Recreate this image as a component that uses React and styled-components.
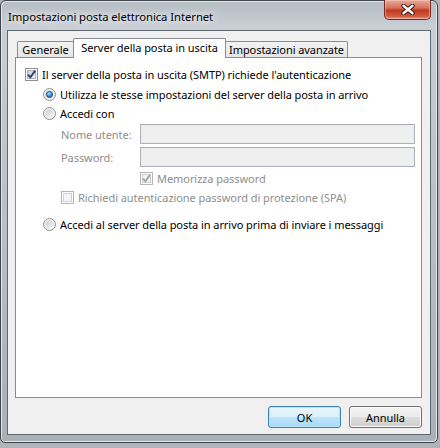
import React, { useId } from "react";
import styled, { createGlobalStyle } from "styled-components";

const GlobalStyle = createGlobalStyle`
  body {
    margin: 0;
    background: #aeb4b9;
    font-family: "Segoe UI", "Noto Sans", sans-serif;
    font-size: 11px;
    letter-spacing: -0.06px;
  }
`;

const Desktop = styled.div`
  width: 440px;
  height: 448px;
  overflow: hidden;
`;

const Window = styled.div`
  box-sizing: border-box;
  width: 438px;
  height: 443px;
  border: 1px solid #3e454d;
  border-radius: 6px 6px 5px 5px;
  background: linear-gradient(to bottom, #b4bcc4 0, #c9cfd5 26px, #c0c6cc 120px, #a9b0b7 100%);
  box-shadow: inset 1px 1px 0 #e3e7eb, inset -1px -1px 0 #e3e7eb;
  padding: 0 6px 7px;
  display: flex;
  flex-direction: column;
`;

const TitleBar = styled.div`
  height: 29px;
  display: flex;
  align-items: flex-start;
  justify-content: space-between;
`;

const Title = styled.div`
  margin: 8px 0 0 1px;
  color: #000;
  font-size: 11.3px;
  text-shadow: 0 0 6px #fff, 0 0 10px #fff;
`;

const CloseButton = styled.div`
  width: 47px;
  height: 20px;
  margin-top: -1px;
  box-sizing: border-box;
  border: 1px solid #6b2a20;
  border-top: none;
  border-radius: 0 0 5px 5px;
  background: linear-gradient(to bottom, #e9a99b 0, #d6735f 40%, #c2391f 55%, #cf5a3f 85%, #e39a7d 100%);
  box-shadow: inset 0 0 0 1px rgba(255, 210, 200, 0.5);
  display: flex;
  align-items: center;
  justify-content: center;
`;

const Client = styled.div`
  flex: 1;
  border: 1px solid #5f676f;
  background: #f0f0f0;
  padding: 7px 8px 0 7px;
  display: flex;
  flex-direction: column;
`;

const TabStrip = styled.div`
  height: 19px;
  display: flex;
  align-items: flex-end;
  padding-left: 2px;
  position: relative;
  z-index: 1;
`;

const Tab = styled.div`
  box-sizing: border-box;
  width: ${(p) => p.$w}px;
  height: ${(p) => (p.$active ? 20 : 16)}px;
  margin-left: ${(p) => (p.$first ? 0 : -1)}px;
  margin-bottom: ${(p) => (p.$active ? -1 : 0)}px;
  border: 1px solid #898c95;
  border-bottom: none;
  border-radius: 2px 2px 0 0;
  background: ${(p) => (p.$active ? "#fff" : "linear-gradient(to bottom, #f3f3f3, #e5e5e5)")};
  color: #000;
  text-align: center;
  line-height: ${(p) => (p.$active ? 17 : 15)}px;
  white-space: nowrap;
  position: relative;
  z-index: ${(p) => (p.$active ? 2 : 1)};
`;

const Panel = styled.div`
  box-sizing: border-box;
  width: 407px;
  height: 341px;
  border: 1px solid #898c95;
  background: #fff;
  padding: 8px 6px 0 9px;
  display: flex;
  flex-direction: column;
`;

const Row = styled.div`
  display: flex;
  align-items: center;
  height: ${(p) => p.$h || 16}px;
  margin-top: ${(p) => p.$mt || 0}px;
  padding-left: ${(p) => p.$indent || 0}px;
  white-space: nowrap;
`;

const Label = styled.span`
  margin-left: 4px;
  color: ${(p) => (p.$disabled ? "#8e8e8e" : "#000")};
`;

const FieldLabel = styled.span`
  width: 79px;
  color: #8e8e8e;
`;

const TextBox = styled.div`
  flex: 1;
  box-sizing: border-box;
  height: 20px;
  border: 1px solid #adb2bb;
  border-top-color: #abadb3;
  background: #efefef;
  box-shadow: inset 0 0 0 1px #e8ebf0;
`;

const ButtonRow = styled.div`
  width: 407px;
  margin-top: 8px;
  display: flex;
  justify-content: flex-end;
  gap: 8px;
`;

const Button = styled.div`
  box-sizing: border-box;
  width: 73px;
  height: 22px;
  border: 1px solid ${(p) => (p.$default ? "#3c7fb1" : "#707070")};
  border-radius: 3px;
  background: ${(p) =>
    p.$default
      ? "linear-gradient(to bottom, #eaf6fd 0, #d9f0fc 50%, #bee6fd 51%, #a7d9f5 100%)"
      : "linear-gradient(to bottom, #f2f2f2 0, #ebebeb 50%, #dddddd 51%, #cfcfcf 100%)"};
  box-shadow: inset 0 0 0 1px ${(p) => (p.$default ? "#b9e3f8" : "#fcfcfc")};
  color: #000;
  display: flex;
  align-items: center;
  justify-content: center;
`;

const CloseGlyph = () => (
  <svg width="14" height="11" viewBox="0 0 14 11">
    <path d="M2.5 1.8 L11.5 9.2 M11.5 1.8 L2.5 9.2" stroke="#3b1912" strokeWidth="4.4" strokeLinecap="round" fill="none" />
    <path d="M2.5 1.8 L11.5 9.2 M11.5 1.8 L2.5 9.2" stroke="#fff" strokeWidth="2.4" strokeLinecap="round" fill="none" />
  </svg>
);

const CheckBox = ({ checked, disabled }) => {
  const id = useId();
  const edge = disabled ? "#b5b5b5" : "#8e8f8f";
  const mark = disabled ? "#a5a5a5" : "#2a427a";
  return (
    <svg width="13" height="13" viewBox="0 0 13 13">
      <defs>
        <linearGradient id={id} x1="0" y1="0" x2="1" y2="1">
          <stop offset="0" stopColor={disabled ? "#f4f4f4" : "#cbcfd5"} />
          <stop offset="1" stopColor={disabled ? "#f4f4f4" : "#f7f7f7"} />
        </linearGradient>
      </defs>
      <rect x="0.5" y="0.5" width="12" height="12" fill="#fff" stroke={edge} />
      <rect x="2.5" y="2.5" width="8" height="8" fill={`url(#${id})`} stroke={disabled ? "#d0d0d0" : "#aeb3b9"} />
      {checked && (
        <path d="M3 6.6 L5.4 9.2 L10.2 2.6" stroke={mark} strokeWidth="1.9" fill="none" />
      )}
    </svg>
  );
};

const Radio = ({ checked }) => {
  const id = useId();
  return (
    <svg width="13" height="13" viewBox="0 0 13 13">
      <defs>
        <linearGradient id={`${id}a`} x1="0" y1="0" x2="1" y2="1">
          <stop offset="0" stopColor="#c9ccd1" />
          <stop offset="1" stopColor="#f8f8f8" />
        </linearGradient>
        <radialGradient id={`${id}b`} cx="0.4" cy="0.35" r="0.7">
          <stop offset="0" stopColor="#a6e7ff" />
          <stop offset="0.5" stopColor="#3b9be0" />
          <stop offset="1" stopColor="#1a4f91" />
        </radialGradient>
      </defs>
      <circle cx="6.5" cy="6.5" r="6" fill="#f4f4f4" stroke="#8e8f8f" />
      <circle cx="6.5" cy="6.5" r="4.2" fill={`url(#${id}a)`} />
      {checked && <circle cx="6.5" cy="6.5" r="3.1" fill={`url(#${id}b)`} stroke="#2b4d80" strokeWidth="0.8" />}
    </svg>
  );
};

export default function App() {
  return (
    <Desktop>
      <GlobalStyle />
      <Window>
        <TitleBar>
          <Title>Impostazioni posta elettronica Internet</Title>
          <CloseButton>
            <CloseGlyph />
          </CloseButton>
        </TitleBar>
        <Client>
          <TabStrip>
            <Tab $first $w={57}>Generale</Tab>
            <Tab $active $w={153}>Server della posta in uscita</Tab>
            <Tab $w={123}>Impostazioni avanzate</Tab>
          </TabStrip>
          <Panel>
            <Row>
              <CheckBox checked />
              <Label>Il server della posta in uscita (SMTP) richiede l'autenticazione</Label>
            </Row>
            <Row $indent={18} $mt={4}>
              <Radio checked />
              <Label>Utilizza le stesse impostazioni del server della posta in arrivo</Label>
            </Row>
            <Row $indent={18} $mt={3}>
              <Radio />
              <Label>Accedi con</Label>
            </Row>
            <Row $indent={36} $mt={3} $h={20}>
              <FieldLabel>Nome utente:</FieldLabel>
              <TextBox />
            </Row>
            <Row $indent={36} $mt={3} $h={20}>
              <FieldLabel>Password:</FieldLabel>
              <TextBox />
            </Row>
            <Row $indent={115} $mt={3}>
              <CheckBox checked disabled />
              <Label $disabled>Memorizza password</Label>
            </Row>
            <Row $indent={36} $mt={3}>
              <CheckBox disabled />
              <Label $disabled>Richiedi autenticazione password di protezione (SPA)</Label>
            </Row>
            <Row $indent={18} $mt={11}>
              <Radio />
              <Label>Accedi al server della posta in arrivo prima di inviare i messaggi</Label>
            </Row>
          </Panel>
          <ButtonRow>
            <Button $default>OK</Button>
            <Button>Annulla</Button>
          </ButtonRow>
        </Client>
      </Window>
    </Desktop>
  );
}
